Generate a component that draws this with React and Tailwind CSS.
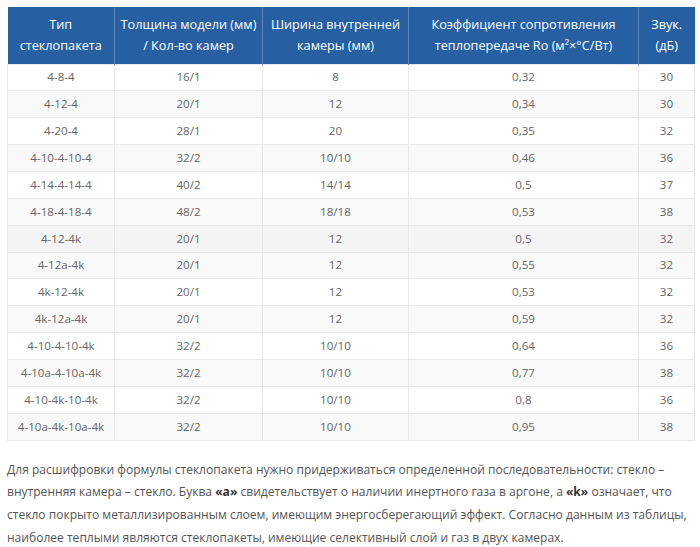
const rows = [
  ["4-8-4", "16/1", "8", "0,32", "30"],
  ["4-12-4", "20/1", "12", "0,34", "30"],
  ["4-20-4", "28/1", "20", "0,35", "32"],
  ["4-10-4-10-4", "32/2", "10/10", "0,46", "36"],
  ["4-14-4-14-4", "40/2", "14/14", "0,5", "37"],
  ["4-18-4-18-4", "48/2", "18/18", "0,53", "38"],
  ["4-12-4k", "20/1", "12", "0,5", "32"],
  ["4-12a-4k", "20/1", "12", "0,55", "32"],
  ["4k-12-4k", "20/1", "12", "0,53", "32"],
  ["4k-12a-4k", "20/1", "12", "0,59", "32"],
  ["4-10-4-10-4k", "32/2", "10/10", "0,64", "36"],
  ["4-10a-4-10a-4k", "32/2", "10/10", "0,77", "38"],
  ["4-10-4k-10-4k", "32/2", "10/10", "0,8", "36"],
  ["4-10a-4k-10a-4k", "32/2", "10/10", "0,95", "38"],
];

const widths = ["w-[107px]", "w-[148px]", "w-[146px]", "w-[230px]", "w-[56px]"];

export default function App() {
  return (
    <div className="bg-white px-[7px] pt-[7px] font-['Open_Sans',sans-serif] text-[#555]" style={{ width: 700, height: 547 }}>
      <table className="w-[687px] table-fixed border-collapse text-center">
        <thead>
          <tr className="h-[57px] bg-[#2660a2] text-white text-[12.7px] leading-[21px]">
            <th className={`${widths[0]} border-r border-[#5c86b8] font-normal`}>Тип<br />стеклопакета</th>
            <th className={`${widths[1]} border-r border-[#5c86b8] font-normal`}>Толщина модели (мм)<br />/ Кол-во камер</th>
            <th className={`${widths[2]} border-r border-[#5c86b8] font-normal`}>Ширина внутренней<br />камеры (мм)</th>
            <th className={`${widths[3]} border-r border-[#5c86b8] font-normal`}>Коэффициент сопротивления<br />теплопередаче Ro (м²×°С/Вт)</th>
            <th className={`${widths[4]} font-normal`}>Звук.<br />(дБ)</th>
          </tr>
        </thead>
        <tbody className="text-[11.6px] text-[#666]">
          {rows.map((r, i) => (
            <tr
              key={i}
              className={`h-[26.86px] ${i === 6 ? "bg-[#f4f4f4]" : i % 2 === 1 ? "bg-[#f9f9f9]" : "bg-white"}`}
            >
              {r.map((c, j) => (
                <td key={j} className="border border-[#e8e8e8] p-0 leading-[18px]">
                  {c}
                </td>
              ))}
            </tr>
          ))}
        </tbody>
      </table>
      <p className="mt-[18px] leading-[22.7px] text-[12.05px]">
        Для расшифровки формулы стеклопакета нужно придерживаться определенной последовательности: стекло – внутренняя камера – стекло. Буква <b className="font-bold text-[#333]">«а»</b> свидетельствует о наличии инертного газа в аргоне, а <b className="font-bold text-[#333]">«k»</b> означает, что стекло покрыто металлизированным слоем, имеющим энергосберегающий эффект. Согласно данным из таблицы, наиболее теплыми являются стеклопакеты, имеющие селективный слой и газ в двух камерах.
      </p>
    </div>
  );
}
